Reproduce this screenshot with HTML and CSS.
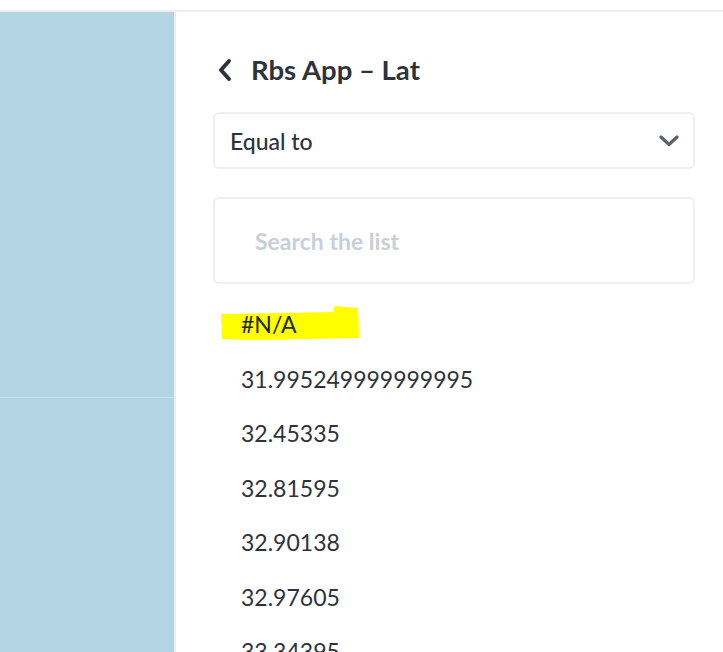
FILE: index.html
```html
<!DOCTYPE html>
<html>
<head>
<meta charset="utf-8">
<link rel="stylesheet" href="styles.css">
</head>
<body>
<div class="topbar"></div>
<div class="layout">
  <aside class="sidebar">
    <div class="sidebar-top"></div>
    <div class="sidebar-bottom"></div>
  </aside>
  <main class="panel">
    <div class="title-row">
      <svg class="back" width="16" height="24" viewBox="0 0 16 24"><path d="M12 3 L4 12 L12 21" fill="none" stroke="#2d333a" stroke-width="4" stroke-linecap="round" stroke-linejoin="round"/></svg>
      <h1 class="title">Rbs App – Lat</h1>
    </div>
    <div class="select">
      <span class="select-label">Equal to</span>
      <svg class="caret" width="20" height="12" viewBox="0 0 20 12"><path d="M2 2 L10 9.5 L18 2" fill="none" stroke="#5b6168" stroke-width="3.2" stroke-linecap="round" stroke-linejoin="round"/></svg>
    </div>
    <div class="search">
      <span class="placeholder">Search the list</span>
    </div>
    <ul class="list">
      <li class="item item-marked"><svg class="marker" width="140" height="36" viewBox="0 0 140 36"><path d="M0 9 L60 8 L112 7 L113 1 L124 2 L137 3 L138 33 L90 34 L30 35 L1 34 Z" fill="#ffff00"/></svg><span class="item-text">#N/A</span></li>
      <li class="item"><span class="item-text">31.995249999999995</span></li>
      <li class="item"><span class="item-text">32.45335</span></li>
      <li class="item"><span class="item-text">32.81595</span></li>
      <li class="item"><span class="item-text">32.90138</span></li>
      <li class="item"><span class="item-text">32.97605</span></li>
      <li class="item"><span class="item-text">33.34395</span></li>
    </ul>
  </main>
</div>
</body>
</html>
```
FILE: styles.css
```css
* { box-sizing: border-box; }
html, body {
  margin: 0;
  padding: 0;
  background: #ffffff;
  overflow: hidden;
  height: 652px;
}
body {
  font-family: Lato, "Open Sans", sans-serif;
  color: #2d333a;
}
.topbar {
  height: 12px;
  border-bottom: 2px solid #eeeeee;
}
.layout {
  display: flex;
  height: 640px;
}
.sidebar {
  width: 176px;
  flex: none;
  background: #b3d4e3;
  border-right: 2px solid #ededed;
  display: flex;
  flex-direction: column;
}
.sidebar-top {
  height: 386px;
  border-bottom: 1px solid #c6dfea;
}
.panel {
  flex: 1;
  padding: 43px 28px 0 37px;
  overflow: hidden;
}
.title-row {
  display: flex;
  align-items: center;
  height: 30px;
}
.back {
  margin-left: 4px;
  margin-right: 18px;
}
.title {
  margin: 0;
  font-size: 27.5px;
  font-weight: 700;
  color: #2d333a;
  line-height: 30px;
}
.select {
  margin-top: 27px;
  height: 57px;
  border: 2px solid #efefef;
  border-radius: 6px;
  display: flex;
  align-items: center;
  justify-content: space-between;
  padding: 0 14px 0 15px;
}
.select-label {
  font-size: 23px;
  font-weight: 500;
  color: #2d333a;
}
.caret { display: block; }
.search {
  margin-top: 28px;
  height: 87px;
  border: 2px solid #efefef;
  border-radius: 6px;
  display: flex;
  align-items: center;
  padding-left: 40px;
}
.placeholder {
  font-size: 23px;
  font-weight: 700;
  color: #c8cfd6;
}
.list {
  list-style: none;
  margin: 13px 0 0 0;
  padding: 0 0 0 28px;
}
.item {
  position: relative;
  height: 54.5px;
  display: flex;
  align-items: center;
  font-size: 23px;
  color: #2d333a;
}
.item-text { position: relative; }
.item-marked { color: #25290c; }
.marker {
  position: absolute;
  left: -20px;
  top: 8px;
}
```
